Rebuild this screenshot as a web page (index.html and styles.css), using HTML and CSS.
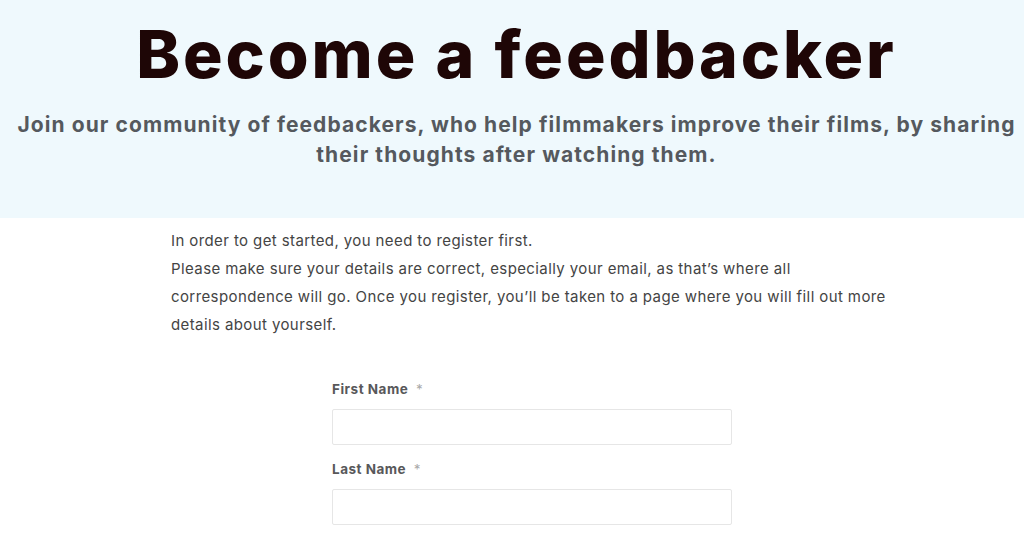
FILE: index.html
```html
<!DOCTYPE html>
<html lang="en">
<head>
	<meta charset="UTF-8">
	<title>Become a feedbacker</title>
	<link rel="stylesheet" href="styles.css">
</head>
<body>
	<header class="hero">
		<h1 class="hero-title">Become a feedbacker</h1>
		<p class="hero-sub">Join our community of feedbackers, who help filmmakers improve their films, by sharing their thoughts after watching them.</p>
	</header>

	<section class="content">
		<div class="column">
			<p class="intro">
				In order to get started, you need to register first.<br>
				Please make sure your details are correct, especially your email, as that’s where all<br>
				correspondence will go. Once you register, you’ll be taken to a page where you will fill out more<br>
				details about yourself.
			</p>

			<form class="signup">
				<div class="field">
					<label for="first">First Name <span class="req">*</span></label>
					<input type="text" id="first">
				</div>
				<div class="field">
					<label for="last">Last Name <span class="req">*</span></label>
					<input type="text" id="last">
				</div>
			</form>
		</div>
	</section>
</body>
</html>
```

FILE: styles.css
```css
*{
	margin: 0;
	padding: 0;
	box-sizing: border-box;
}
body{
	background: #fff;
	font-family: Inter, "DejaVu Sans", sans-serif;
	overflow: hidden;
}
.hero{
	background: #eff9fd;
	height: 218px;
	padding: 21px 0 0 9px;
	text-align: center;
}
.hero-title{
	font-size: 66px;
	line-height: 66px;
	font-weight: 800;
	color: #1e0606;
	letter-spacing: 2.9px;
}
.hero-sub{
	width: 1005px;
	margin: 23px auto 0;
	font-size: 21px;
	line-height: 30px;
	font-weight: 700;
	color: #55595e;
	letter-spacing: 1.08px;
}
.content{
	padding: 9px 0 0 40px;
}
.column{
	width: 722px;
	margin: 0 auto;
}
.intro{
	font-size: 15px;
	line-height: 28px;
	color: #444;
	letter-spacing: 0.4px;
	white-space: nowrap;
}
.signup{
	width: 400px;
	margin: 40px auto 0;
}
.field{
	margin-bottom: 14px;
}
.field label{
	display: block;
	font-size: 13.5px;
	line-height: 20px;
	font-weight: 700;
	color: #58585a;
	letter-spacing: 0.5px;
	margin-bottom: 10px;
}
.req{
	color: #aaa;
	font-weight: 400;
	margin-left: 4px;
}
.field input{
	display: block;
	width: 100%;
	height: 36px;
	border: 1px solid #e6e6e6;
	border-radius: 2px;
	background: #fff;
	outline: none;
}
```
